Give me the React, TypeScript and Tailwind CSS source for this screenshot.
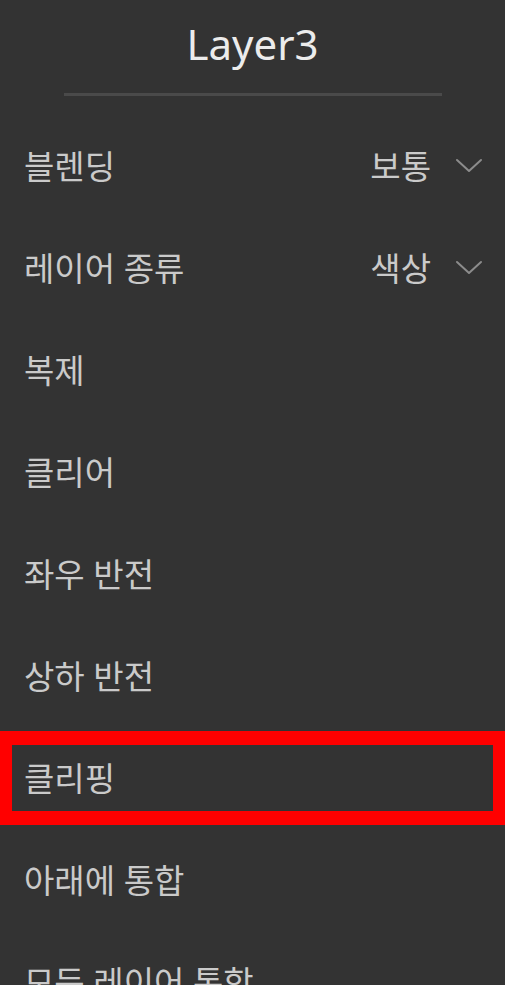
type Item = {
  label: string;
  value?: string;
  selected?: boolean;
};

const items: Item[] = [
  { label: '블렌딩', value: '보통' },
  { label: '레이어 종류', value: '색상' },
  { label: '복제' },
  { label: '클리어' },
  { label: '좌우 반전' },
  { label: '상하 반전' },
  { label: '클리핑', selected: true },
  { label: '아래에 통합' },
  { label: '모든 레이어 통합' },
];

function Chevron() {
  return (
    <svg width="28" height="16" viewBox="0 0 28 16" fill="none" className="text-[#8c8c8c]">
      <polyline points="2,2 14,13 26,2" stroke="currentColor" strokeWidth="2" strokeLinecap="round" strokeLinejoin="round" />
    </svg>
  );
}

export default function App() {
  return (
    <main
      className="w-[505px] h-[985px] overflow-hidden bg-[#333333]"
      style={{ fontFamily: '"Noto Sans", "Noto Sans CJK KR", sans-serif' }}
    >
      <div className="h-[93px] flex items-center justify-center pb-[6px] text-[42px] text-[#ececec]">
        Layer3
      </div>
      <div className="ml-[64px] mr-[63px] h-[3px] bg-[#4a4a4a]" />
      <ul className="pt-[19px]">
        {items.map(item => (
          <li key={item.label} className="h-[102px] py-[4px]">
            <div
              className={
                'h-full flex items-center justify-between px-[12px] border-x-[12px] border-y-[14px] ' +
                (item.selected ? 'border-[#ff0000]' : 'border-transparent')
              }
            >
              <span className="text-[33px] leading-none text-[#cacaca] whitespace-nowrap">{item.label}</span>
              {item.value && (
                <div className="flex items-center gap-[24px] -mr-[2px]">
                  <span className="text-[33px] leading-none text-[#cacaca]">{item.value}</span>
                  <Chevron />
                </div>
              )}
            </div>
          </li>
        ))}
      </ul>
    </main>
  );
}
